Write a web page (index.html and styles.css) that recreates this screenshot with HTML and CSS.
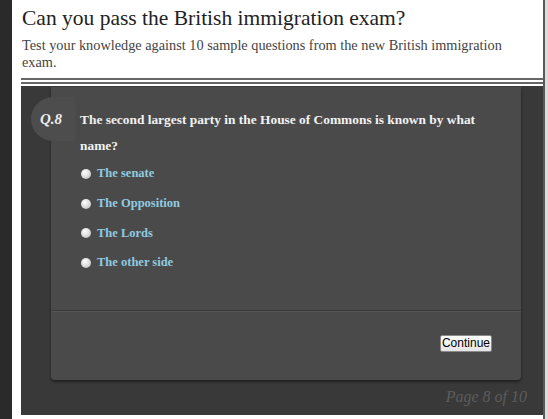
FILE: index.html
```html
<!DOCTYPE html>
<html>
<head>
<meta charset="utf-8">
<link rel="stylesheet" href="styles.css">
</head>
<body>
<div class="side"></div>
<div class="main">
  <h1 class="title">Can you pass the British immigration exam?</h1>
  <p class="intro">Test your knowledge against 10 sample questions from the new British immigration exam.</p>
  <div class="rule"></div>
  <div class="panel">
    <div class="card">
      <div class="qtab">Q.8</div>
      <div class="body">
        <p class="question">The second largest party in the House of Commons is known by what name?</p>
        <ul class="options">
          <li class="opt"><span class="radio"></span><span class="label">The senate</span></li>
          <li class="opt"><span class="radio"></span><span class="label">The Opposition</span></li>
          <li class="opt"><span class="radio"></span><span class="label">The Lords</span></li>
          <li class="opt"><span class="radio"></span><span class="label">The other side</span></li>
        </ul>
      </div>
      <div class="foot">
        <button class="btn">Continue</button>
      </div>
    </div>
    <div class="pager">Page 8 of 10</div>
  </div>
</div>
<div class="edge"></div>
</body>
</html>
```
FILE: styles.css
```css
html, body { margin: 0; padding: 0; }
body {
  display: flex;
  width: 548px;
  height: 419px;
  overflow: hidden;
  background: #fff;
  font-family: "Liberation Serif", serif;
}
.side { width: 12px; background: #2a2a2a; flex: none; }
.edge { width: 5px; flex: none; border-left: 2px solid #5a5a5a; background: #dcdcdc; box-sizing: border-box; }
.main { flex: 1; padding-left: 9px; display: flex; flex-direction: column; }
.title {
  margin: 4px 0 0 1px;
  font-weight: normal;
  font-size: 21.5px;
  line-height: 28px;
  color: #222;
}
.intro {
  margin: 5px 0 0 1px;
  max-width: 500px;
  font-size: 14.3px;
  line-height: 17px;
  color: #444;
}
.rule {
  margin-top: 7px;
  height: 2px;
  border-top: 2px solid #666;
  border-bottom: 2px solid #666;
}
.panel {
  margin-top: 2px;
  background: #393939;
  padding: 1px 22px 0 30px;
  height: 329px;
  box-sizing: border-box;
}
.card {
  position: relative;
  background: #4a4a4a;
  border-radius: 0 0 4px 4px;
  box-shadow: 0 2px 3px rgba(0,0,0,0.45);
}
.qtab {
  position: absolute;
  left: -20px;
  top: 10px;
  width: 44px;
  height: 44px;
  border-radius: 22px 0 0 22px;
  background: #4d4d4d;
  color: #eee;
  font-style: italic;
  font-weight: bold;
  font-size: 15px;
  line-height: 44px;
  padding-left: 9px;
  box-sizing: border-box;
}
.body { padding: 20px 30px 0 29px; height: 223px; box-sizing: border-box; }
.question {
  margin: 0;
  color: #f2f2f2;
  font-weight: bold;
  font-size: 13.4px;
  line-height: 26px;
}
.options { list-style: none; margin: 0 0 0 1px; padding: 0; }
.opt { display: flex; align-items: center; height: 29.7px; }
.radio {
  width: 10px; height: 10px; border-radius: 50%;
  background: radial-gradient(circle at 40% 35%, #fff, #d6d6d6 60%, #aaa);
  margin-right: 6px;
}
.label { color: #8fcbe0; font-weight: bold; font-size: 12.5px; }
.foot {
  border-top: 1px solid #3a3a3a;
  box-shadow: inset 0 1px 0 #555;
  height: 70px;
  box-sizing: border-box;
  display: flex;
  justify-content: flex-end;
  align-items: flex-start;
  padding: 24px 29px 0 0;
}
.btn {
  font-family: "Liberation Sans", sans-serif;
  font-size: 12px;
  color: #000;
  background: linear-gradient(#fff, #e4e4e4);
  border: 1px solid #8a8a8a;
  border-radius: 2px;
  padding: 1px 1px;
  height: 17px;
  line-height: 13px;
}
.pager {
  text-align: right;
  margin-top: 8px;
  margin-right: -6px;
  color: #5c5c5c;
  font-style: italic;
  font-size: 16px;
}
```
